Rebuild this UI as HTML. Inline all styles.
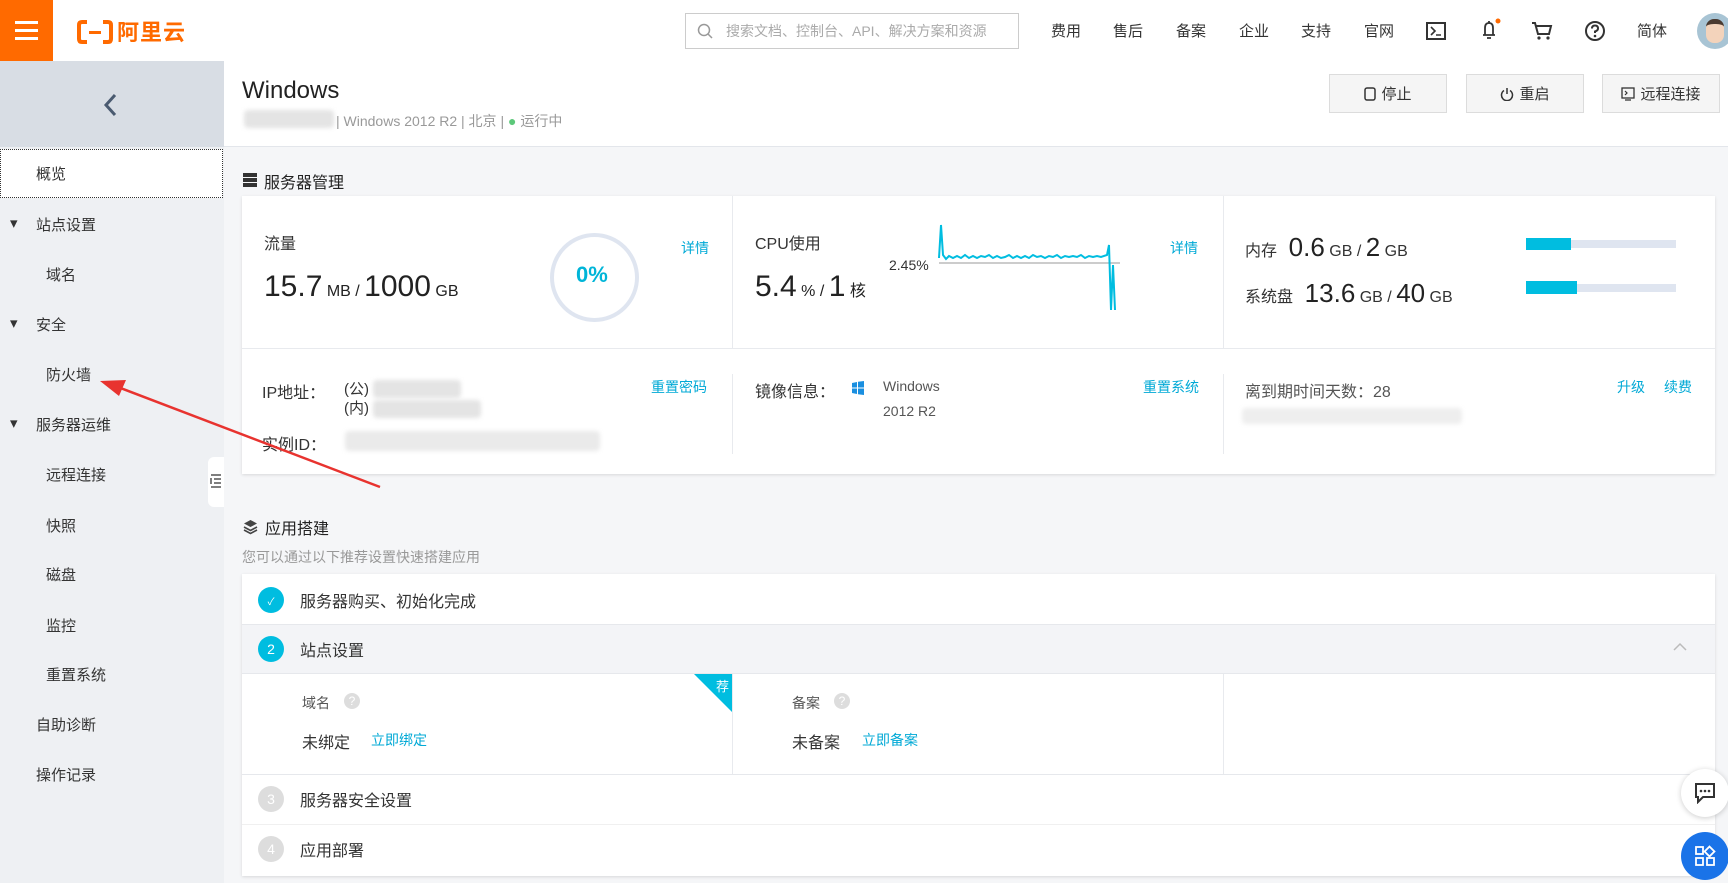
<!DOCTYPE html>
<html><head><meta charset="utf-8"><style>
*{margin:0;padding:0;box-sizing:border-box}
body{width:1728px;height:883px;overflow:hidden;background:#f5f6f8;font-family:"Liberation Sans","Noto Sans CJK SC",sans-serif;color:#333;position:relative}
.a{position:absolute;white-space:nowrap}
.blue{color:#00a9d6}
.g{color:#999}
.nav{font-size:15px;color:#333;top:20px}
.side{font-size:15px;color:#333}
.btn{position:absolute;top:74px;height:39px;width:118px;background:#f5f5f5;border:1px solid #dcdcdc;font-size:15px;display:flex;align-items:center;justify-content:center;gap:5px}
.card{position:absolute;background:#fff;box-shadow:0 1px 3px rgba(0,0,0,.12)}
.blur{position:absolute;background:#e4e4e4;filter:blur(2px);border-radius:4px}
.circ{position:absolute;width:26px;height:26px;border-radius:50%;color:#fff;font-size:14px;display:flex;align-items:center;justify-content:center}
</style></head><body>
<!-- header -->
<div class="a" style="left:0;top:0;width:1728px;height:61px;background:#fff;box-shadow:0 1px 4px rgba(0,0,0,.08)"></div>
<div class="a" style="left:0;top:0;width:53px;height:61px;background:#ff6a00"></div>
<div class="a" style="left:15px;top:21px;width:23px;height:3px;background:#fff;box-shadow:0 8px 0 #fff,0 16px 0 #fff"></div>
<svg class="a" style="left:77px;top:20px" width="36" height="24" viewBox="0 0 36 24"><path d="M10 2H5Q2 2 2 5V19Q2 22 5 22H10M26 2H31Q34 2 34 5V19Q34 22 31 22H26" fill="none" stroke="#ff6a00" stroke-width="4"/><rect x="12" y="11" width="12" height="3" fill="#ff6a00"/></svg>
<div class="a" style="left:117px;top:15px;font-size:22px;font-weight:bold;color:#ff6a00;letter-spacing:1px">阿里云</div>
<div class="a" style="left:685px;top:13px;width:334px;height:36px;border:1px solid #ccc;background:#fff"></div>
<svg class="a" style="left:697px;top:23px" width="16" height="16"><circle cx="7" cy="7" r="5.5" fill="none" stroke="#999" stroke-width="1.5"/><path d="M11 11L15 15" stroke="#999" stroke-width="1.5"/></svg>
<div class="a" style="left:726px;top:21px;font-size:14px;color:#aaa">搜索文档、控制台、API、解决方案和资源</div>
<div class="a nav" style="left:1051px">费用</div>
<div class="a nav" style="left:1113px">售后</div>
<div class="a nav" style="left:1176px">备案</div>
<div class="a nav" style="left:1239px">企业</div>
<div class="a nav" style="left:1301px">支持</div>
<div class="a nav" style="left:1364px">官网</div>
<svg class="a" style="left:1426px;top:22px" width="20" height="18"><rect x="1" y="1" width="18" height="16" fill="none" stroke="#333" stroke-width="2"/><path d="M5 5L9 9L5 13M10 13H15" stroke="#333" stroke-width="1.6" fill="none"/></svg>
<svg class="a" style="left:1478px;top:18px" width="24" height="24"><path d="M5 17H17M7 17V10Q7 5 11 5Q15 5 15 10V17M9 20H13M11 3V5" stroke="#333" stroke-width="1.8" fill="none"/><circle cx="20" cy="3" r="2.5" fill="#ff6a00"/></svg>
<svg class="a" style="left:1531px;top:21px" width="22" height="20"><path d="M1 2H4L7 13H18L20 5H5" stroke="#333" stroke-width="2" fill="none"/><circle cx="8" cy="17" r="1.6" fill="#333"/><circle cx="17" cy="17" r="1.6" fill="#333"/></svg>
<svg class="a" style="left:1584px;top:20px" width="22" height="22"><circle cx="11" cy="11" r="9" fill="none" stroke="#333" stroke-width="2"/><path d="M8 8.5Q8 5.5 11 5.5Q14 5.5 14 8.5Q14 10.5 11 11.5V13" stroke="#333" stroke-width="2" fill="none"/><circle cx="11" cy="16" r="1.3" fill="#333"/></svg>
<div class="a nav" style="left:1637px">简体</div>
<div class="a" style="left:1697px;top:13px;width:36px;height:36px;border-radius:50%;background:#a8c4d4;overflow:hidden"><div style="position:absolute;left:9px;top:6px;width:18px;height:24px;border-radius:8px;background:#f3d3bb;border-top:5px solid #4a3a30"></div></div>
<!-- sidebar -->
<div class="a" style="left:0;top:61px;width:224px;height:822px;background:#eef0f3"></div>
<div class="a" style="left:0;top:61px;width:224px;height:86px;background:#d8dde4"></div>
<svg class="a" style="left:102px;top:92px" width="16" height="26"><path d="M13 3L4 13L13 23" stroke="#4a5a70" stroke-width="3" fill="none"/></svg>
<div class="a" style="left:0;top:149px;width:223px;height:49px;background:#fff;border:1px dotted #333"></div>
<div class="a side" style="left:36px;top:163px">概览</div>
<div class="a side" style="left:10px;top:214px">▾</div><div class="a side" style="left:36px;top:214px">站点设置</div>
<div class="a side" style="left:46px;top:264px">域名</div>
<div class="a side" style="left:10px;top:314px">▾</div><div class="a side" style="left:36px;top:314px">安全</div>
<div class="a side" style="left:46px;top:364px">防火墙</div>
<div class="a side" style="left:10px;top:414px">▾</div><div class="a side" style="left:36px;top:414px">服务器运维</div>
<div class="a side" style="left:46px;top:464px">远程连接</div>
<div class="a side" style="left:46px;top:515px">快照</div>
<div class="a side" style="left:46px;top:564px">磁盘</div>
<div class="a side" style="left:46px;top:615px">监控</div>
<div class="a side" style="left:46px;top:664px">重置系统</div>
<div class="a side" style="left:36px;top:714px">自助诊断</div>
<div class="a side" style="left:36px;top:764px">操作记录</div>
<div class="a" style="left:208px;top:457px;width:16px;height:50px;background:#fff;border-radius:6px 0 0 6px"></div>
<svg class="a" style="left:210px;top:474px" width="12" height="14"><path d="M1 1H11M4 5H11M4 9H11M1 13H11M1 4V10" stroke="#555" stroke-width="1.5" fill="none"/></svg>
<!-- main top -->
<div class="a" style="left:224px;top:61px;width:1504px;height:86px;background:#fff;border-bottom:1px solid #e3e6eb"></div>
<div class="a" style="left:242px;top:77px;font-size:24px;color:#222">Windows</div>
<div class="blur" style="left:244px;top:110px;width:90px;height:18px"></div>
<div class="a" style="left:336px;top:111px;font-size:14px;color:#999">| Windows 2012 R2 | 北京 | <span style="color:#5cc87a">●</span> 运行中</div>
<div class="btn" style="left:1329px"><svg width="12" height="14"><rect x="1" y="1" width="10" height="12" rx="2" fill="none" stroke="#333" stroke-width="1.5"/></svg>停止</div>
<div class="btn" style="left:1466px"><svg width="14" height="14"><path d="M4 3.5A5.5 5.5 0 1 0 10 3.5M7 1V7" stroke="#333" stroke-width="1.5" fill="none"/></svg>重启</div>
<div class="btn" style="left:1602px"><svg width="14" height="14"><rect x="1" y="1" width="12" height="10" fill="none" stroke="#333" stroke-width="1.3"/><path d="M4 4L6 6L4 8M4 13H10" stroke="#333" stroke-width="1.2" fill="none"/></svg>远程连接</div>
<!-- server mgmt -->
<svg class="a" style="left:243px;top:173px" width="14" height="14"><rect y="0" width="14" height="4" fill="#333"/><rect y="5" width="14" height="4" fill="#333"/><rect y="10" width="14" height="4" fill="#333"/></svg>
<div class="a" style="left:264px;top:169px;font-size:16px;color:#222">服务器管理</div>
<div class="card" style="left:242px;top:196px;width:1473px;height:278px"></div>
<div class="a" style="left:732px;top:196px;width:1px;height:152px;background:#e8eaee"></div>
<div class="a" style="left:1223px;top:196px;width:1px;height:152px;background:#e8eaee"></div>
<div class="a" style="left:242px;top:348px;width:1473px;height:1px;background:#e8eaee"></div>
<div class="a" style="left:732px;top:374px;width:1px;height:80px;background:#e8eaee"></div>
<div class="a" style="left:1223px;top:374px;width:1px;height:80px;background:#e8eaee"></div>
<div class="a" style="left:264px;top:230px;font-size:16px">流量</div>
<div class="a" style="left:264px;top:270px;font-size:30px;color:#222">15.7<span style="font-size:16px"> MB / </span>1000<span style="font-size:16px"> GB</span></div>
<div class="a" style="left:550px;top:233px;width:89px;height:89px;border-radius:50%;border:4px solid #dfe5f0"></div>
<div class="a" style="left:576px;top:262px;font-size:22px;color:#00b5d8;font-weight:bold">0%</div>
<div class="a blue" style="left:681px;top:238px;font-size:14px">详情</div>
<div class="a" style="left:755px;top:230px;font-size:16px">CPU使用</div>
<div class="a" style="left:755px;top:270px;font-size:30px;color:#222">5.4<span style="font-size:16px"> % / </span>1<span style="font-size:16px"> 核</span></div>
<div class="a" style="left:889px;top:257px;font-size:14px">2.45%</div>
<svg class="a" style="left:935px;top:215px" width="195" height="100"><path d="M4 48H185" stroke="#999" stroke-width="1"/><path d="M4 43L6 10L8 40L11 44L14 41L18 43L22 41L26 43L30 40L34 43L38 41L42 43L46 41L50 42L54 40L58 43L62 41L66 43L70 42L74 40L78 43L82 41L86 43L90 41L94 43L98 40L102 42L106 41L110 43L114 41L118 42L122 40L126 43L130 41L134 42L138 41L142 42L146 40L150 43L154 41L158 42L162 41L166 42L172 40L174 30L176 95L178 50L180 95" stroke="#00bde0" stroke-width="2" fill="none"/></svg>
<div class="a blue" style="left:1170px;top:238px;font-size:14px">详情</div>
<div class="a" style="left:1245px;top:232px;font-size:16px">内存 <span style="font-size:26px;color:#222">&nbsp;0.6</span> GB / <span style="font-size:26px;color:#222">2</span> GB</div>
<div class="a" style="left:1245px;top:278px;font-size:16px">系统盘 <span style="font-size:26px;color:#222">&nbsp;13.6</span> GB / <span style="font-size:26px;color:#222">40</span> GB</div>
<div class="a" style="left:1526px;top:240px;width:150px;height:8px;background:#dfe5f0"></div>
<div class="a" style="left:1526px;top:238px;width:45px;height:12px;background:#00bde0"></div>
<div class="a" style="left:1526px;top:284px;width:150px;height:8px;background:#dfe5f0"></div>
<div class="a" style="left:1526px;top:281px;width:51px;height:13px;background:#00bde0"></div>
<div class="a" style="left:262px;top:379px;font-size:16px">IP地址：</div>
<div class="a" style="left:344px;top:378px;font-size:15px">(公)</div>
<div class="a" style="left:344px;top:397px;font-size:15px">(内)</div>
<div class="blur" style="left:373px;top:380px;width:88px;height:18px"></div>
<div class="blur" style="left:373px;top:400px;width:108px;height:18px"></div>
<div class="a" style="left:262px;top:431px;font-size:16px">实例ID：</div>
<div class="blur" style="left:345px;top:431px;width:255px;height:20px;background:#eaeaea"></div>
<div class="a blue" style="left:651px;top:377px;font-size:14px">重置密码</div>
<div class="a" style="left:755px;top:378px;font-size:16px">镜像信息：</div>
<svg class="a" style="left:852px;top:381px" width="12" height="14"><path d="M0 2L5 1V6.5H0ZM6 .8L12 0V6.5H6ZM0 7.5H5V13L0 12ZM6 7.5H12V14L6 13.2Z" fill="#1a8fe0"/></svg>
<div class="a" style="left:883px;top:378px;font-size:14px;color:#555">Windows</div>
<div class="a" style="left:883px;top:403px;font-size:14px;color:#555">2012 R2</div>
<div class="a blue" style="left:1143px;top:377px;font-size:14px">重置系统</div>
<div class="a" style="left:1245px;top:378px;font-size:16px;color:#555">离到期时间天数：28</div>
<div class="blur" style="left:1242px;top:408px;width:220px;height:16px;background:#eee"></div>
<div class="a blue" style="left:1617px;top:377px;font-size:14px">升级</div>
<div class="a blue" style="left:1664px;top:377px;font-size:14px">续费</div>
<!-- arrow -->
<svg class="a" style="left:0;top:0" width="400" height="500"><path d="M380 487L110 384" stroke="#e8332f" stroke-width="2.5"/><path d="M100 381L126 380L119 396Z" fill="#e8332f"/></svg>
<!-- app build -->
<svg class="a" style="left:243px;top:519px" width="15" height="16"><path d="M7.5 1L14 4.5L7.5 8L1 4.5Z" fill="#444"/><path d="M1 8L7.5 11.5L14 8M1 11L7.5 14.5L14 11" stroke="#444" stroke-width="1.6" fill="none"/></svg>
<div class="a" style="left:265px;top:515px;font-size:16px;color:#222">应用搭建</div>
<div class="a" style="left:242px;top:547px;font-size:14px;color:#999">您可以通过以下推荐设置快速搭建应用</div>
<div class="card" style="left:242px;top:574px;width:1473px;height:302px"></div>
<div class="a" style="left:242px;top:624px;width:1473px;height:50px;background:#f3f4f7;border-top:1px solid #e6e8ec;border-bottom:1px solid #e6e8ec"></div>
<div class="a" style="left:242px;top:774px;width:1473px;height:1px;background:#e6e8ec"></div>
<div class="a" style="left:242px;top:824px;width:1473px;height:1px;background:#f0f0f0"></div>
<div class="a" style="left:732px;top:674px;width:1px;height:100px;background:#e8eaee"></div>
<div class="a" style="left:1223px;top:674px;width:1px;height:100px;background:#e8eaee"></div>
<div class="circ" style="left:258px;top:587px;background:#00bde0;font-size:10px">✓</div>
<div class="a" style="left:300px;top:588px;font-size:16px">服务器购买、初始化完成</div>
<div class="circ" style="left:258px;top:636px;background:#00bde0">2</div>
<div class="a" style="left:300px;top:637px;font-size:16px">站点设置</div>
<svg class="a" style="left:1672px;top:642px" width="16" height="10"><path d="M2 8L8 2L14 8" stroke="#bbb" stroke-width="1.5" fill="none"/></svg>
<div class="a" style="left:302px;top:693px;font-size:14px;color:#555">域名</div>
<div class="a" style="left:344px;top:693px;width:16px;height:16px;border-radius:50%;background:#ddd;color:#fff;font-size:12px;text-align:center;line-height:16px">?</div>
<div class="a" style="left:302px;top:729px;font-size:16px">未绑定</div>
<div class="a blue" style="left:371px;top:730px;font-size:14px">立即绑定</div>
<svg class="a" style="left:694px;top:674px" width="38" height="38"><path d="M0 0H38V38Z" fill="#00bde0"/></svg>
<div class="a" style="left:716px;top:676px;font-size:13px;color:#fff">荐</div>
<div class="a" style="left:792px;top:693px;font-size:14px;color:#555">备案</div>
<div class="a" style="left:834px;top:693px;width:16px;height:16px;border-radius:50%;background:#ddd;color:#fff;font-size:12px;text-align:center;line-height:16px">?</div>
<div class="a" style="left:792px;top:729px;font-size:16px">未备案</div>
<div class="a blue" style="left:862px;top:730px;font-size:14px">立即备案</div>
<div class="circ" style="left:258px;top:786px;background:#ddd">3</div>
<div class="a" style="left:300px;top:787px;font-size:16px">服务器安全设置</div>
<div class="circ" style="left:258px;top:836px;background:#ddd">4</div>
<div class="a" style="left:300px;top:837px;font-size:16px">应用部署</div>
<!-- floating -->
<div class="a" style="left:1681px;top:769px;width:48px;height:48px;border-radius:50%;background:#fff;box-shadow:0 1px 6px rgba(0,0,0,.2)"></div>
<svg class="a" style="left:1694px;top:782px" width="22" height="22"><path d="M2 2H20V15H9L4 20V15H2Z" fill="none" stroke="#333" stroke-width="2"/><circle cx="7" cy="9" r="1.3" fill="#333"/><circle cx="11" cy="9" r="1.3" fill="#333"/><circle cx="15" cy="9" r="1.3" fill="#333"/></svg>
<div class="a" style="left:1681px;top:832px;width:48px;height:48px;border-radius:50%;background:#1a73e8"></div>
<svg class="a" style="left:1694px;top:845px" width="22" height="22"><rect x="2" y="2" width="7" height="7" fill="none" stroke="#fff" stroke-width="1.8"/><rect x="2" y="13" width="7" height="7" fill="none" stroke="#fff" stroke-width="1.8"/><rect x="13" y="13" width="7" height="7" fill="none" stroke="#fff" stroke-width="1.8"/><rect x="12" y="3" width="7" height="7" transform="rotate(45 15.5 6.5)" fill="none" stroke="#fff" stroke-width="1.8"/></svg>
</body></html>
